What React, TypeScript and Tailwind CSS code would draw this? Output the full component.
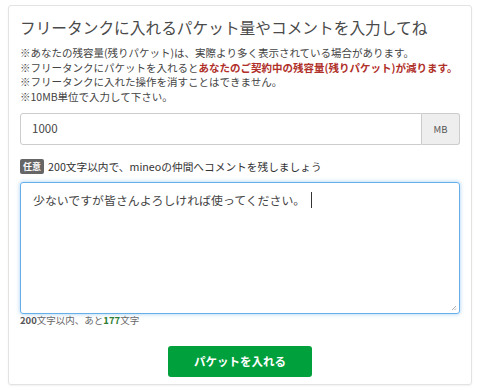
export default function App() {
  const font = { fontFamily: '"Noto Sans CJK JP", "Noto Sans", sans-serif' }
  return (
    <div className="w-[480px] h-[390px] bg-white pt-[5px] px-2" style={font}>
      <div className="h-[380px] border border-[#e3e3e3] rounded-[3px] shadow-[0_1px_2px_rgba(0,0,0,0.06)] px-[11px] pt-[11px]">
        <h1 className="text-[15.7px] leading-[22px] text-[#4a4a4a] font-normal">
          フリータンクに入れるパケット量やコメントを入力してね
        </h1>
        <div className="mt-[7px] text-[10.5px] leading-[14.7px] text-[#444] whitespace-nowrap">
          <p>※あなたの残容量(残りパケット)は、実際より多く表示されている場合があります。</p>
          <p>
            ※フリータンクにパケットを入れると
            <span className="font-bold text-[#b0302a]">あなたのご契約中の残容量(残りパケット)が減ります。</span>
          </p>
          <p>※フリータンクに入れた操作を消すことはできません。</p>
          <p>※10MB単位で入力して下さい。</p>
        </div>

        <div className="mt-[8px] flex h-[32px] w-[440px]">
          <div className="flex-1 flex items-center border border-[#ccc] rounded-l-[3px] px-[11px] text-[11.5px] text-[#444]">
            1000
          </div>
          <div className="w-[38px] flex items-center justify-center bg-[#eee] border border-l-0 border-[#ccc] rounded-r-[3px] text-[9.5px] text-[#555]">
            MB
          </div>
        </div>

        <div className="mt-[14px] flex items-center gap-[4px] h-[16px]">
          <span className="bg-[#666] text-white text-[9px] leading-[15px] px-[3px] rounded-[2px] font-bold">任意</span>
          <span className="text-[10.7px] text-[#333]">200文字以内で、mineoの仲間へコメントを残しましょう</span>
        </div>

        <div className="mt-[7px] relative w-[440px] h-[132px] border border-[#66afe9] rounded-[3px] shadow-[0_0_4px_rgba(102,175,233,0.6)] px-[12px] pt-[8px]">
          <div className="flex items-center text-[11.9px] leading-[18px] text-[#444]">
            少ないですが皆さんよろしければ使ってください。
            <span className="ml-[6px] w-px h-[16px] bg-[#333]" />
          </div>
          <svg className="absolute right-[2px] bottom-[2px]" width="6" height="6" viewBox="0 0 6 6">
            <path d="M5 1 L1 5 M5 3.5 L3.5 5" stroke="#999" strokeWidth="0.8" />
          </svg>
        </div>
        <p className="text-[9.5px] leading-[12px] text-[#666]">
          <b className="text-[#555]">200</b>文字以内、あと<b className="text-[#2e7d32]">177</b>文字
        </p>

        <div className="mt-[20px] flex justify-center">
          <button className="w-[144px] h-[31px] bg-[#00a03c] rounded-[3px] text-white text-[11.5px] font-bold">
            パケットを入れる
          </button>
        </div>
      </div>
    </div>
  )
}
